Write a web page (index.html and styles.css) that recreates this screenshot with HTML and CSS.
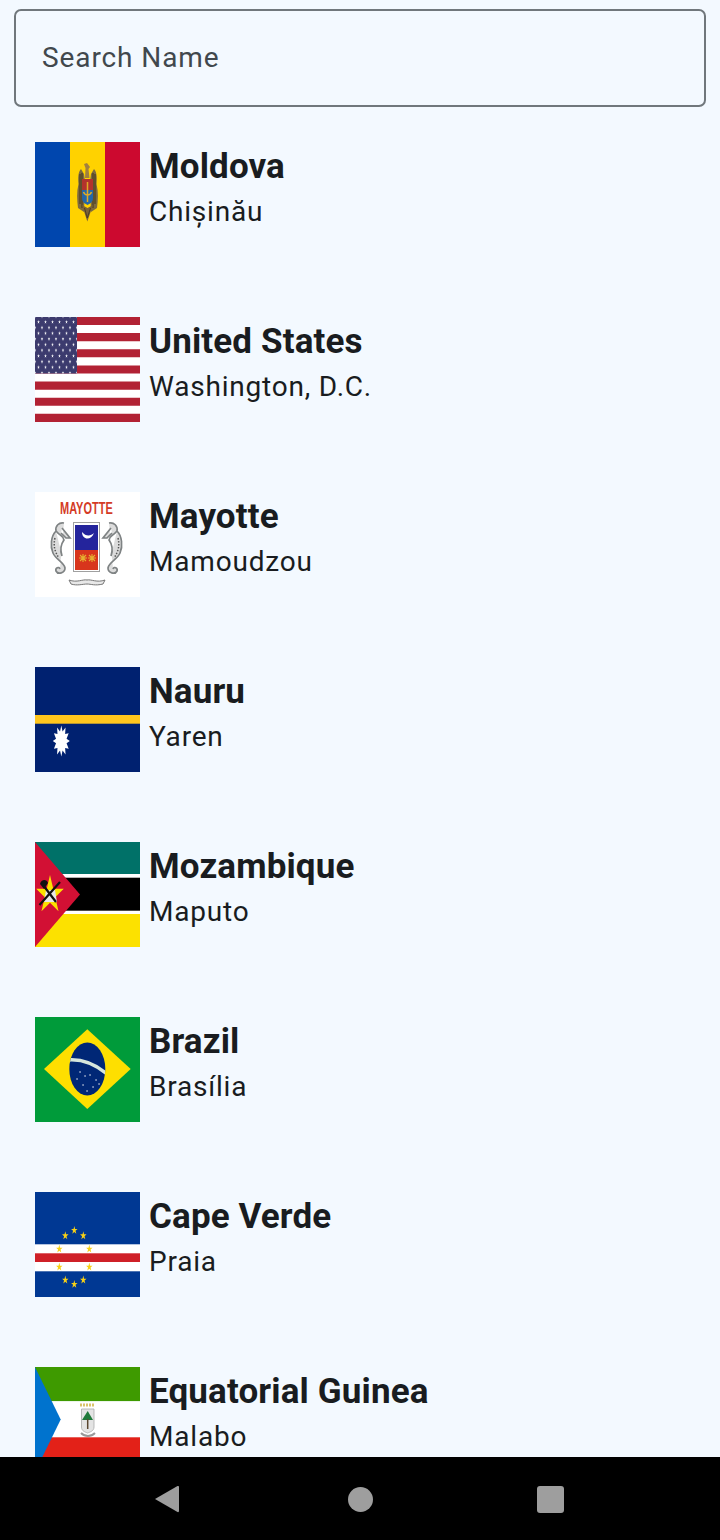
FILE: index.html
```html
<!DOCTYPE html>
<html lang="en">
<head>
<meta charset="utf-8">
<title>Countries</title>
<link rel="stylesheet" href="styles.css">
</head>
<body>
<div class="screen">
  <main class="content">
    <div class="search-wrap"><input class="search" type="text" placeholder="Search Name" aria-label="Search Name"></div>
    <ul class="list">
      <li class="row">
        <svg class="flag" viewBox="0 0 105 105" aria-hidden="true">
          <rect width="35" height="105" fill="#0046ae"/><rect x="35" width="35" height="105" fill="#ffd200"/><rect x="70" width="35" height="105" fill="#cc092f"/>
          <path d="M46 27 C43 30 43 36 43.500 42 C41.500 50 42 58 43 66 L49 70 L50 40 L49 32Z" fill="#7d6a3f"/>
          <path d="M59 27 C62 30 62 36 61.500 42 C63.500 50 63 58 62 66 L56 70 L55 40 L56 32Z" fill="#7d6a3f"/>
          <path d="M45 32 V62 M47 31 V66 M60 32 V62 M58 31 V66" stroke="#4d3f22" stroke-width="1.200"/>
          <path d="M50 36 L50.500 26 L49 22 L52 21 L55 25 L53.500 27 L54.500 36Z" fill="#a1803f"/>
          <path d="M47 37 H58 V48 H47Z" fill="#b3332c"/>
          <path d="M47 48 H58 V56 C58 60 54.500 62 52.500 63 C50.500 62 47 60 47 56Z" fill="#2467a8"/>
          <path d="M52.500 40 V60 M48.500 50 C50 54 55 54 56.500 50" fill="none" stroke="#e0ab25" stroke-width="1.500"/>
          <path d="M47 63 L52.300 79.500 L58 63 L52.500 66Z" fill="#7a6238"/>
          <path d="M49.500 66 L52.300 76 L55.500 66" fill="none" stroke="#4d3f22" stroke-width="1"/>
        </svg>
        <div class="info"><p class="name">Moldova</p><p class="capital">Chișinău</p></div>
      </li>
      <li class="row">
        <svg class="flag" viewBox="0 0 105 105" aria-hidden="true">
          <defs><pattern id="us-stars" width="7" height="11.340" patternUnits="userSpaceOnUse" y="2.200">
            <polygon transform="translate(3.500 2.800) scale(1.300 2.100)" fill="#fff" points="0,-1 .225,-.309 .951,-.309 .363,.118 .588,.809 0,.382 -.588,.809 -.363,.118 -.951,-.309 -.225,-.309"/>
            <polygon transform="translate(7 8.470) scale(1.300 2.100)" fill="#fff" points="0,-1 .225,-.309 .951,-.309 .363,.118 .588,.809 0,.382 -.588,.809 -.363,.118 -.951,-.309 -.225,-.309"/>
            <polygon transform="translate(0 8.470) scale(1.300 2.100)" fill="#fff" points="0,-1 .225,-.309 .951,-.309 .363,.118 .588,.809 0,.382 -.588,.809 -.363,.118 -.951,-.309 -.225,-.309"/>
          </pattern></defs>
          <rect width="105" height="105" fill="#fff"/>
          <path d="M0 4H105M0 20.150H105M0 36.300H105M0 52.450H105M0 68.600H105M0 84.750H105M0 100.900H105" stroke="#b22234" stroke-width="8.080"/>
          <rect width="42" height="56.500" fill="#3c3b6e"/>
          <rect width="42" height="56.500" fill="url(#us-stars)"/>
        </svg>
        <div class="info"><p class="name">United States</p><p class="capital">Washington, D.C.</p></div>
      </li>
      <li class="row">
        <svg class="flag" viewBox="0 0 105 105" aria-hidden="true">
          <rect width="105" height="105" fill="#fff"/>
          <text transform="translate(25 22) scale(1 1.500)" class="flag-text">MAYOTTE</text>
          <path d="M29 31 C24 30 20 34 21 39 C16 44 15 54 18 61 C21 68 29 70 30 76 C30 81 23 83 21 79 C20 76 24 74 25 77 M21 39 C25 44 29 44 29 48 C26 52 25 58 27 64 M27 36 L35 46 L31 46 L26 41" fill="#dcdcdc" stroke="#7f8384" stroke-width="1.700"/>
          <path d="M20 46 C18 54 20 60 24 66" fill="none" stroke="#555" stroke-width="1.500" stroke-dasharray="1.500 1.500"/>
          <path d="M74 31 C79 30 83 34 82 39 C87 44 88 54 85 61 C82 68 74 70 73 76 C73 81 80 83 82 79 C83 76 79 74 78 77 M82 39 C78 44 74 44 74 48 C77 52 78 58 76 64 M76 36 L68 46 L72 46 L77 41" fill="#dcdcdc" stroke="#7f8384" stroke-width="1.700"/>
          <path d="M83 46 C85 54 83 60 79 66" fill="none" stroke="#555" stroke-width="1.500" stroke-dasharray="1.500 1.500"/>
          <rect x="38.500" y="30.500" width="26" height="49" fill="#fff" stroke="#a0a0a0" stroke-width="1"/>
          <rect x="40" y="33" width="23" height="25" fill="#24249c"/>
          <rect x="40" y="58" width="23" height="20" fill="#d8351c"/>
          <path d="M47 40 C47 48 56 49 59 41 C56 44 51 45 47 40Z" fill="#fff"/>
          <path d="M48 62V70M44 66H52M45 63L51 69M51 63L45 69M57 62V70M53 66H61M54 63L60 69M60 63L54 69" stroke="#e6b030" stroke-width="1.100"/>
          <path d="M34 88 C42 91 48 87 52 88 C56 87 62 91 70 88 L68 92 C60 94 56 92 52 92 C48 92 42 94 36 92Z" fill="#e8e8e8" stroke="#777" stroke-width="1"/>
        </svg>
        <div class="info"><p class="name">Mayotte</p><p class="capital">Mamoudzou</p></div>
      </li>
      <li class="row">
        <svg class="flag" viewBox="0 0 105 105" aria-hidden="true">
          <rect width="105" height="105" fill="#002170"/>
          <rect y="48" width="105" height="8.700" fill="#ffc61e"/>
          <polygon transform="translate(26.300 74) scale(8.500 15.500)" fill="#fff" points="0,-1 .15,-.62 .5,-.866 .45,-.45 .866,-.5 .62,-.15 1,0 .62,.15 .866,.5 .45,.45 .5,.866 .15,.62 0,1 -.15,.62 -.5,.866 -.45,.45 -.866,.5 -.62,.15 -1,0 -.62,-.15 -.866,-.5 -.45,-.45 -.5,-.866 -.15,-.62"/>
        </svg>
        <div class="info"><p class="name">Nauru</p><p class="capital">Yaren</p></div>
      </li>
      <li class="row">
        <svg class="flag" viewBox="0 0 105 105" aria-hidden="true">
          <rect width="105" height="33" fill="#007168"/>
          <rect y="32" width="105" height="40" fill="#fff"/>
          <rect y="35.700" width="105" height="33" fill="#000"/>
          <rect y="72" width="105" height="33" fill="#fce100"/>
          <polygon points="0,0 45,52.500 0,105" fill="#d21034"/>
          <polygon transform="translate(15 53) scale(14.500 20)" fill="#fce100" points="0,-1 .225,-.309 .951,-.309 .363,.118 .588,.809 0,.382 -.588,.809 -.363,.118 -.951,-.309 -.225,-.309"/>
          <path d="M11 48 H20 L22 60 H9Z" fill="#e8e8e8"/>
          <path d="M4.500 63 L25 40 M8 43 L21 60" stroke="#111" stroke-width="2.200"/>
          <path d="M5 42 C6 37 12 37 13 41 L9 47Z" fill="#111"/>
        </svg>
        <div class="info"><p class="name">Mozambique</p><p class="capital">Maputo</p></div>
      </li>
      <li class="row">
        <svg class="flag" viewBox="0 0 105 105" aria-hidden="true">
          <defs><clipPath id="br-globe"><ellipse cx="52.300" cy="52" rx="18" ry="26.500"/></clipPath></defs>
          <rect width="105" height="105" fill="#009b3a"/>
          <polygon points="9,52 52.300,12.300 95.700,52 52.300,92" fill="#fedf00"/>
          <ellipse cx="52.300" cy="52" rx="18" ry="26.500" fill="#002776"/>
          <path clip-path="url(#br-globe)" d="M33 43 C46 42 60 47 72 57" fill="none" stroke="#d5e6dc" stroke-width="3.500"/>
          <path d="M42 62h.1M50 59h.1M55 58h.1M48 68h.1M58 70h.1M61 63h.1M52 74h.1M45 55h.1M64 67h.1" stroke="#fff" stroke-width="1.300" stroke-linecap="round"/>
        </svg>
        <div class="info"><p class="name">Brazil</p><p class="capital">Brasília</p></div>
      </li>
      <li class="row">
        <svg class="flag" viewBox="0 0 105 105" aria-hidden="true">
          <defs><polygon id="cv-star" fill="#f7d116" points="0,-1 .225,-.309 .951,-.309 .363,.118 .588,.809 0,.382 -.588,.809 -.363,.118 -.951,-.309 -.225,-.309"/></defs>
          <rect width="105" height="105" fill="#003893"/>
          <rect y="52.300" width="105" height="27" fill="#fff"/>
          <rect y="61.300" width="105" height="8.700" fill="#cf2027"/>
          <use href="#cv-star" transform="translate(39.300 38.300) scale(3.400 4.400)"/>
          <use href="#cv-star" transform="translate(30.300 43.700) scale(3.400 4.400)"/>
          <use href="#cv-star" transform="translate(48.300 43.700) scale(3.400 4.400)"/>
          <use href="#cv-star" transform="translate(24.300 57) scale(3.400 4.400)"/>
          <use href="#cv-star" transform="translate(54.300 57) scale(3.400 4.400)"/>
          <use href="#cv-star" transform="translate(24.300 75) scale(3.400 4.400)"/>
          <use href="#cv-star" transform="translate(54.300 75) scale(3.400 4.400)"/>
          <use href="#cv-star" transform="translate(30.300 88) scale(3.400 4.400)"/>
          <use href="#cv-star" transform="translate(48.300 88) scale(3.400 4.400)"/>
          <use href="#cv-star" transform="translate(39.300 92.300) scale(3.400 4.400)"/>
        </svg>
        <div class="info"><p class="name">Cape Verde</p><p class="capital">Praia</p></div>
      </li>
      <li class="row">
        <svg class="flag" viewBox="0 0 105 105" aria-hidden="true">
          <rect width="105" height="34.300" fill="#3e9a00"/>
          <rect y="34.300" width="105" height="36" fill="#fff"/>
          <rect y="70.300" width="105" height="34.700" fill="#e32118"/>
          <polygon points="0,0 25.700,52.500 0,105" fill="#0073ce"/>
          <path d="M45 38 H60" stroke="#d9c36a" stroke-width="3" stroke-dasharray="2 1"/>
          <path d="M46.500 42 H59 V60 C59 64 55 65 52.700 66 C50 65 46.500 64 46.500 60Z" fill="#e4e4e4" stroke="#aaa" stroke-width=".8"/>
          <path d="M52.700 44 L58 53 H47Z" fill="#1f7a3a"/>
          <path d="M52.700 52 V62" stroke="#5a4630" stroke-width="1.500"/>
          <path d="M46 66 C50 70 56 70 60 66" fill="none" stroke="#999" stroke-width="2"/>
        </svg>
        <div class="info"><p class="name">Equatorial Guinea</p><p class="capital">Malabo</p></div>
      </li>
    </ul>
  </main>
  <nav class="navbar" aria-label="System navigation">
    <svg class="nav-back" viewBox="0 0 25 28" aria-hidden="true"><path d="M1 14 L23.500 1 Q25 .500 25 2 V26 Q25 27.500 23.500 27 Z" fill="#9e9e9e"/></svg>
    <span class="nav-home"></span>
    <span class="nav-recent"></span>
  </nav>
</div>
</body>
</html>
```
FILE: styles.css
```css
* { box-sizing: border-box; }

html, body {
  margin: 0;
  padding: 0;
  height: 100%;
}

body {
  background: #f3f9ff;
  font-family: Roboto, "Liberation Sans", sans-serif;
  color: #191c20;
}

.screen {
  display: flex;
  flex-direction: column;
  height: 1540px;
  overflow: hidden;
}

.content {
  flex: 1;
  min-height: 0;
  overflow: hidden;
}

.search-wrap {
  padding: 9px 14px 0;
}

.search {
  display: block;
  width: 100%;
  height: 98px;
  padding: 0 26px 2px;
  border: 2px solid #70777c;
  border-radius: 7px;
  background: transparent;
  font: 400 28px Roboto, sans-serif;
  letter-spacing: 0.9px;
  color: #191c20;
  outline: none;
}

.search::placeholder {
  color: #41484d;
  opacity: 1;
}

.list {
  list-style: none;
  margin: 0;
  padding: 35px 35px 0;
}

.row {
  display: flex;
  align-items: flex-start;
  gap: 9px;
  height: 175px;
}

.flag {
  display: block;
  flex: none;
  width: 105px;
  height: 105px;
}

.flag-text {
  font: 700 11px "Liberation Sans", sans-serif;
  fill: #d43b26;
}

.info {
  display: flex;
  flex-direction: column;
  padding-top: 1px;
}

.name,
.capital {
  margin: 0;
}

.name {
  font-size: 35px;
  font-weight: 700;
  line-height: 48px;
  letter-spacing: 0.13px;
}

.capital {
  font-size: 28px;
  line-height: 42px;
  letter-spacing: 0.8px;
}

.navbar {
  flex: none;
  display: flex;
  align-items: center;
  justify-content: space-between;
  height: 83px;
  padding: 1px 156px 0 154px;
  background: #000;
}

.nav-back {
  display: block;
  width: 25px;
  height: 28px;
}

.nav-home {
  width: 25px;
  height: 25px;
  margin-left: 4px;
  border-radius: 50%;
  background: #9e9e9e;
}

.nav-recent {
  width: 27px;
  height: 27px;
  border-radius: 3px;
  background: #9e9e9e;
}
```
